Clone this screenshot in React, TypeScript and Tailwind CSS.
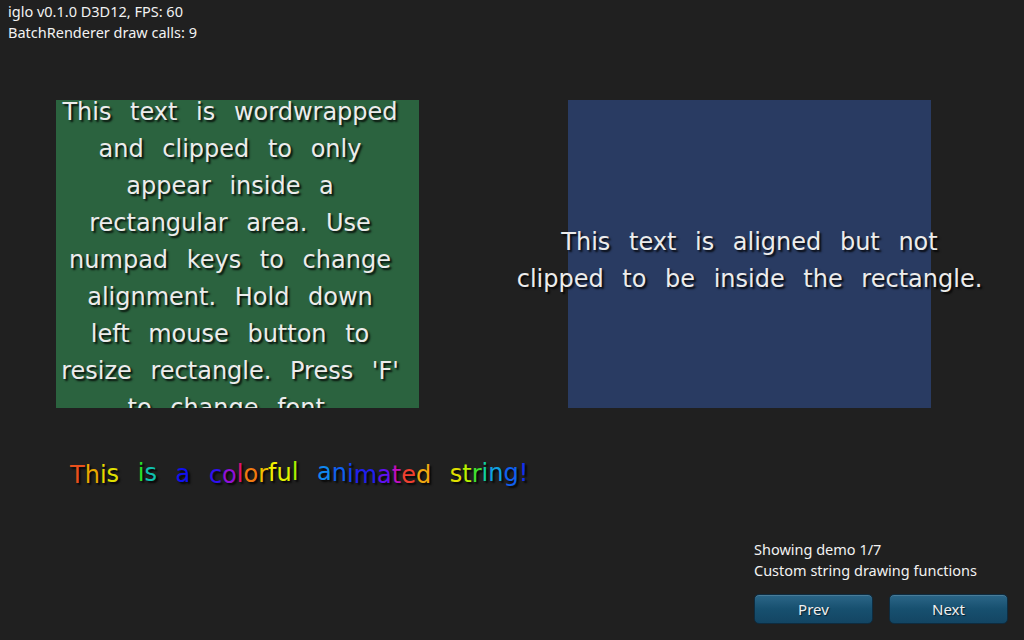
import React from 'react';

const wrapped = [
  'This text is wordwrapped',
  'and clipped to only',
  'appear inside a',
  'rectangular area. Use',
  'numpad keys to change',
  'alignment. Hold down',
  'left mouse button to',
  "resize rectangle. Press 'F'",
  'to change font.',
];

const rainbow: [string, string, number][] = [
  ['T', '#e8501c', 0], ['h', '#e8a800', 0], ['i', '#e8d800', 0], ['s', '#e0e000', -1],
  [' ', '', 0],
  ['i', '#28e028', -2], ['s', '#10c0b0', -2],
  [' ', '', 0],
  ['a', '#1010f0', -1],
  [' ', '', 0],
  ['c', '#3010f0', 0], ['o', '#9010d8', 0], ['l', '#e01070', -1], ['o', '#f07a10', -1],
  ['r', '#f0c000', -1], ['f', '#f0f000', -2], ['u', '#e0f000', -2], ['l', '#a8f000', -3],
  [' ', '', 0],
  ['a', '#1088f0', -3], ['n', '#1060f0', -2], ['i', '#1040f0', -1], ['m', '#2020f0', 0],
  ['a', '#6010f0', 0], ['t', '#c010c0', 0], ['e', '#f04030', 0], ['d', '#f0a810', 0],
  [' ', '', 0],
  ['s', '#e0e000', -1], ['t', '#b8f000', -1], ['r', '#40e030', -1], ['i', '#10d0a0', -2],
  ['n', '#10a0e0', -2], ['g', '#1060f0', -2], ['!', '#1030f0', -2],
];

const bigText =
  "font-['DejaVu_Sans',sans-serif] text-[24px] leading-[37px] [word-spacing:11px] text-[#ececec] [text-shadow:2px_2px_2px_rgba(0,0,0,0.85)]";

function Button({ label }: { label: string }) {
  return (
    <button className="w-[119px] h-[30px] rounded-[5px] border border-[#0e2c40] bg-gradient-to-b from-[#2b6688] via-[#17506f] to-[#134563] text-[#f0f0f0] text-[15px] font-['Noto_Sans',sans-serif] [text-shadow:1px_1px_1px_rgba(0,0,0,0.6)] shadow-[inset_0_1px_0_rgba(255,255,255,0.15)]">
      {label}
    </button>
  );
}

export default function App() {
  return (
    <div className="w-[1024px] h-[640px] bg-[#202020] flex flex-col overflow-hidden font-['Noto_Sans',sans-serif]">
      <div className="pl-2 pt-[1px] text-[14.5px] leading-[21px] text-[#f2f2f2]">
        <div>iglo v0.1.0 D3D12, FPS: 60</div>
        <div>BatchRenderer draw calls: 9</div>
      </div>

      <div className="flex mt-[57px] pl-[56px] gap-[149px]">
        <div className="w-[363px] h-[308px] bg-[#2b633f] overflow-hidden">
          <div className={`${bigText} mt-[-6px] pr-[15px] text-center whitespace-nowrap`}>
            {wrapped.map((l) => (
              <div key={l}>{l}</div>
            ))}
          </div>
        </div>
        <div className="relative w-[363px] h-[308px] bg-[#293b62]">
          <div className={`${bigText} absolute inset-y-0 left-1/2 -translate-x-1/2 w-[600px] flex flex-col items-center justify-center pt-[13px] whitespace-nowrap`}>
            <div>This text is aligned but not</div>
            <div>clipped to be inside the rectangle.</div>
          </div>
        </div>
      </div>

      <div className={`${bigText} mt-[49px] pl-[70px] whitespace-pre`}>
        {rainbow.map(([ch, color, dy], i) =>
          ch === ' ' ? (
            ' '
          ) : (
            <span key={i} className="inline-block" style={{ color, transform: `translateY(${dy}px)` }}>
              {ch}
            </span>
          )
        )}
      </div>

      <div className="mt-auto self-end pr-4 pb-[16px] w-[270px]">
        <div className="text-[14.5px] leading-[21px] text-[#f2f2f2]">
          <div>Showing demo 1/7</div>
          <div>Custom string drawing functions</div>
        </div>
        <div className="flex gap-[16px] mt-[13px]">
          <Button label="Prev" />
          <Button label="Next" />
        </div>
      </div>
    </div>
  );
}
